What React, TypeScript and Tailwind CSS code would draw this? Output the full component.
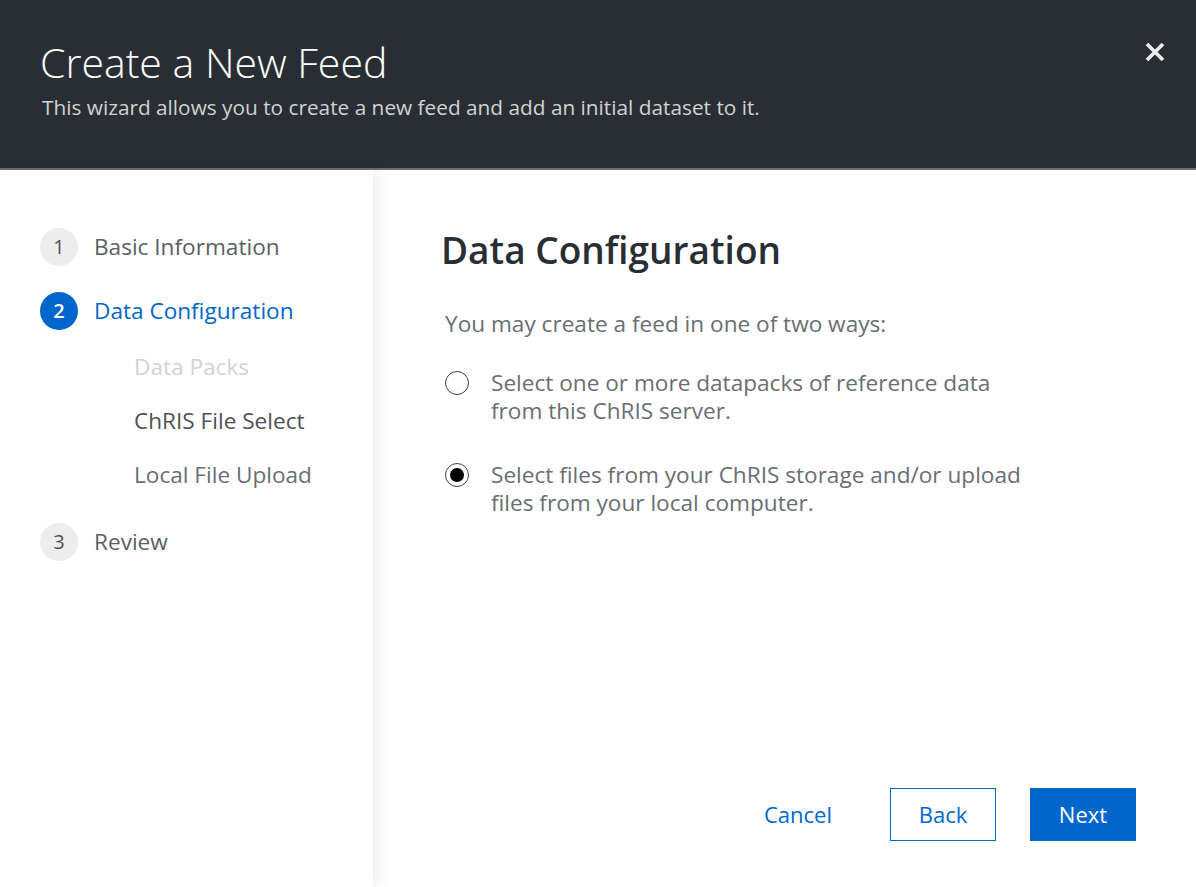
import React from "react";

const font = { fontFamily: '"Open Sans", "Noto Sans", sans-serif' };

function Step({ n, label, active }: { n: number; label: string; active?: boolean }) {
  return (
    <div className="flex items-center h-[38px]">
      <div
        className={
          "w-[38px] h-[38px] rounded-full flex items-center justify-center text-[20px] " +
          (active ? "bg-[#0066cc] text-white font-semibold" : "bg-[#ededed] text-[#4f5255]")
        }
      >
        {n}
      </div>
      <div className={"ml-[16px] text-[22.6px] " + (active ? "text-[#0066cc]" : "text-[#5b5f63]")}>{label}</div>
    </div>
  );
}

function Radio({ checked }: { checked?: boolean }) {
  return (
    <div className="w-[24px] h-[24px] rounded-full border border-[#3c3f42] bg-white flex items-center justify-center shrink-0 mt-[2px]">
      {checked && <div className="w-[14px] h-[14px] rounded-full bg-black" />}
    </div>
  );
}

export default function App() {
  return (
    <div className="w-[1196px] h-[887px] bg-white overflow-hidden flex flex-col" style={font}>
      <header className="h-[170px] bg-[#292e34] border-b-2 border-[#6a6e73] relative shrink-0 pl-[40px] pt-[36px]">
        <h1 className="text-[41px] font-light text-white leading-[52px]">Create a New Feed</h1>
        <p className="text-[20.8px] text-[#d2d2d2] mt-[5px] ml-[2px] leading-[28px]">
          This wizard allows you to create a new feed and add an initial dataset to it.
        </p>
        <button className="absolute right-[30px] top-[41px] w-[22px] h-[22px] flex items-center justify-center">
          <svg width="22" height="22" viewBox="0 0 22 22">
            <path d="M3 3 L19 19 M19 3 L3 19" stroke="#ededed" strokeWidth="3.6" strokeLinecap="butt" />
          </svg>
        </button>
      </header>
      <div className="flex flex-1 min-h-0">
        <aside className="w-[373px] shrink-0 bg-white pl-[40px] pt-[58px] relative z-10 shadow-[4px_0_14px_rgba(3,3,3,0.08)]">
          <Step n={1} label="Basic Information" />
          <div className="mt-[26px]">
            <Step n={2} label="Data Configuration" active />
          </div>
          <div className="pl-[94px] text-[22.6px] mt-[21px] flex flex-col gap-[22px] leading-[32px]">
            <div className="text-[#d2d2d2]">Data Packs</div>
            <div className="text-[#4f5255]">ChRIS File Select</div>
            <div className="text-[#6a6e73]">Local File Upload</div>
          </div>
          <div className="mt-[32px]">
            <Step n={3} label="Review" />
          </div>
        </aside>
        <main className="flex-1 pl-[68px] pr-[60px] pt-[56px] flex flex-col">
          <h2 className="text-[37px] font-semibold text-[#292e34] leading-[48px]">Data Configuration</h2>
          <p className="text-[22.6px] text-[#6a6e73] mt-[35px] ml-[4px] leading-[30px]">You may create a feed in one of two ways:</p>
          <div className="mt-[30px] ml-[4px] flex flex-col gap-[36px]">
            <label className="flex gap-[22px] items-start">
              <Radio />
              <span className="text-[22.6px] text-[#6a6e73] leading-[28px] max-w-[545px]">
                Select one or more datapacks of reference data from this ChRIS server.
              </span>
            </label>
            <label className="flex gap-[22px] items-start">
              <Radio checked />
              <span className="text-[22.6px] text-[#6a6e73] leading-[28px] max-w-[545px]">
                Select files from your ChRIS storage and/or upload files from your local computer.
              </span>
            </label>
          </div>
          <div className="mt-auto mb-[46px] flex items-center justify-end gap-[34px]">
            <button className="text-[22px] text-[#0066cc] px-[24px] h-[53px]">Cancel</button>
            <button className="w-[106px] h-[53px] border border-[#0066cc] text-[22px] text-[#0066cc]">Back</button>
            <button className="w-[106px] h-[53px] bg-[#0066cc] text-[22px] text-white">Next</button>
          </div>
        </main>
      </div>
    </div>
  );
}
